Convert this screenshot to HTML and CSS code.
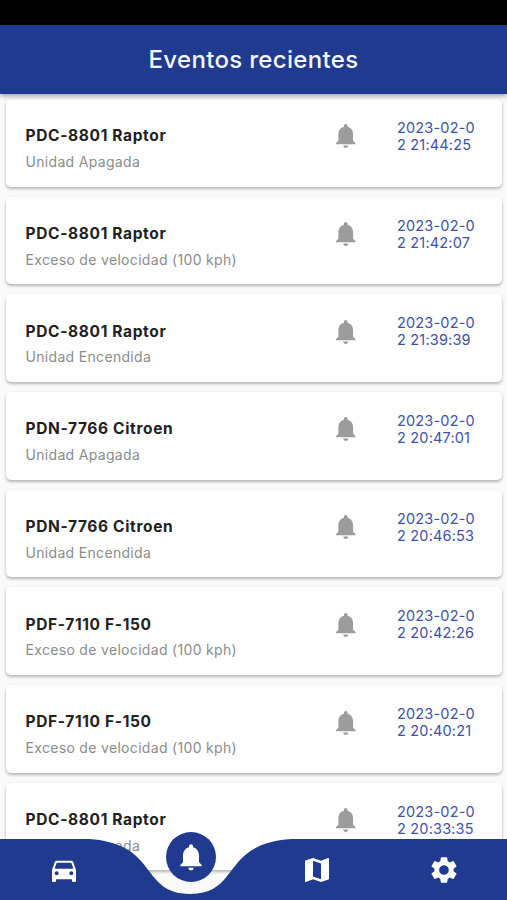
FILE: index.html
```html
<!DOCTYPE html>
<html lang="es">
<head>
<meta charset="utf-8">
<title>Eventos recientes</title>
<link rel="stylesheet" href="styles.css">
</head>
<body>
<svg class="defs" aria-hidden="true">
  <symbol id="bell" viewBox="0 0 24 24"><path d="M12 22c1.1 0 2-.9 2-2h-4c0 1.1.89 2 2 2zm6-6v-5c0-3.07-1.64-5.64-4.5-6.32V4c0-.83-.67-1.5-1.5-1.5s-1.5.67-1.5 1.5v.68C7.63 5.36 6 7.92 6 11v5l-2 2v1h16v-1l-2-2z"/></symbol>
</svg>
<div class="app">
  <div class="status"></div>
  <header class="bar"><h1>Eventos recientes</h1></header>
  <main class="list">
    <article class="card"><div class="info"><h2>PDC-8801 Raptor</h2><p>Unidad Apagada</p></div><svg class="bell"><use href="#bell"/></svg><time>2023-02-0<br>2 21:44:25</time></article>
    <article class="card"><div class="info"><h2>PDC-8801 Raptor</h2><p>Exceso de velocidad (100 kph)</p></div><svg class="bell"><use href="#bell"/></svg><time>2023-02-0<br>2 21:42:07</time></article>
    <article class="card"><div class="info"><h2>PDC-8801 Raptor</h2><p>Unidad Encendida</p></div><svg class="bell"><use href="#bell"/></svg><time>2023-02-0<br>2 21:39:39</time></article>
    <article class="card"><div class="info"><h2>PDN-7766 Citroen</h2><p>Unidad Apagada</p></div><svg class="bell"><use href="#bell"/></svg><time>2023-02-0<br>2 20:47:01</time></article>
    <article class="card"><div class="info"><h2>PDN-7766 Citroen</h2><p>Unidad Encendida</p></div><svg class="bell"><use href="#bell"/></svg><time>2023-02-0<br>2 20:46:53</time></article>
    <article class="card"><div class="info"><h2>PDF-7110 F-150</h2><p>Exceso de velocidad (100 kph)</p></div><svg class="bell"><use href="#bell"/></svg><time>2023-02-0<br>2 20:42:26</time></article>
    <article class="card"><div class="info"><h2>PDF-7110 F-150</h2><p>Exceso de velocidad (100 kph)</p></div><svg class="bell"><use href="#bell"/></svg><time>2023-02-0<br>2 20:40:21</time></article>
    <article class="card"><div class="info"><h2>PDC-8801 Raptor</h2><p>Unidad Apagada</p></div><svg class="bell"><use href="#bell"/></svg><time>2023-02-0<br>2 20:33:35</time></article>
  </main>
  <nav class="nav">
    <svg class="nav-shape" viewBox="0 0 507 61"><path d="M0 0H88.7C159.7 4.6 139.4 54.9 190.3 54.9C240.8 54.9 220.5 4.6 291.5 0H507V61H0Z"/></svg>
    <a class="item"><svg viewBox="0 0 24 24"><path d="M18.92 6.01C18.72 5.42 18.16 5 17.5 5h-11c-.66 0-1.21.42-1.42 1.01L3 12v8c0 .55.45 1 1 1h1c.55 0 1-.45 1-1v-1h12v1c0 .55.45 1 1 1h1c.55 0 1-.45 1-1v-8l-2.08-5.99zM6.5 16c-.83 0-1.5-.67-1.5-1.5S5.67 13 6.5 13s1.5.67 1.5 1.5S7.33 16 6.5 16zm11 0c-.83 0-1.5-.67-1.5-1.5s.67-1.5 1.5-1.5 1.5.67 1.5 1.5-.67 1.5-1.5 1.5zM5 11l1.5-4.5h11L19 11H5z"/></svg></a>
    <a class="item active"><span class="disc"><svg><use href="#bell"/></svg></span></a>
    <a class="item"><svg viewBox="0 0 24 24"><path d="M20.5 3l-.16.03L15 5.1 9 3 3.36 4.9c-.21.07-.36.25-.36.48V20.5c0 .28.22.5.5.5l.16-.03L9 18.9l6 2.1 5.64-1.9c.21-.07.36-.25.36-.48V3.5c0-.28-.22-.5-.5-.5zM15 19l-6-2.11V5l6 2.11V19z"/></svg></a>
    <a class="item"><svg viewBox="0 0 24 24"><path d="M19.14 12.94c.04-.3.06-.61.06-.94 0-.32-.02-.64-.07-.94l2.03-1.58c.18-.14.23-.41.12-.61l-1.92-3.32c-.12-.22-.37-.29-.59-.22l-2.39.96c-.5-.38-1.03-.7-1.62-.94l-.36-2.54c-.04-.24-.24-.41-.48-.41h-3.84c-.24 0-.43.17-.47.41l-.36 2.54c-.59.24-1.13.57-1.62.94l-2.39-.96c-.22-.08-.47 0-.59.22L2.74 8.87c-.12.21-.08.47.12.61l2.03 1.58c-.05.3-.09.63-.09.94s.02.64.07.94l-2.03 1.58c-.18.14-.23.41-.12.61l1.92 3.32c.12.22.37.29.59.22l2.39-.96c.5.38 1.03.7 1.62.94l.36 2.54c.05.24.24.41.48.41h3.84c.24 0 .44-.17.47-.41l.36-2.54c.59-.24 1.13-.56 1.62-.94l2.39.96c.22.08.47 0 .59-.22l1.92-3.32c.12-.22.07-.47-.12-.61l-2.01-1.58zM12 15.6c-1.98 0-3.6-1.62-3.6-3.6s1.62-3.6 3.6-3.6 3.6 1.62 3.6 3.6-1.62 3.6-3.6 3.6z"/></svg></a>
  </nav>
</div>
</body>
</html>
```

FILE: styles.css
```css
* { box-sizing: border-box; margin: 0; }
body { background: #fafafa; font-family: Inter, "Liberation Sans", sans-serif; }
.defs { position: absolute; width: 0; height: 0; }
.app { position: relative; height: 900px; overflow: hidden; display: flex; flex-direction: column; }
.status { height: 25px; background: #000; flex: none; }
.bar {
  position: relative; z-index: 1; flex: none; height: 69px;
  display: flex; align-items: center; justify-content: center;
  background: #1f3a8f; color: #f4f7ff;
  box-shadow: 0 2px 5px rgba(0, 0, 0, .36);
}
.bar h1 { font-size: 24px; font-weight: 500; letter-spacing: .32px; line-height: 30px; }
.list { display: flex; flex-direction: column; gap: 10.2px; padding: 5px 5px 0 6px; }
.card {
  flex: none; height: 87.5px; display: flex; align-items: flex-start;
  padding: 0 0 0 19.5px; border-radius: 5px; background: #fff;
  box-shadow: 0 2px 3px rgba(0, 0, 0, .24), 0 1px 4px rgba(0, 0, 0, .06);
}
.info { width: 305px; padding-top: 27.3px; }
.info h2 { font-size: 15.5px; font-weight: 650; letter-spacing: .65px; line-height: 20px; color: #212121; }
.info p { margin-top: 5.7px; font-size: 14px; letter-spacing: .32px; line-height: 19px; color: #8c8c8c; }
.bell { width: 29.5px; height: 29.5px; margin-top: 22.4px; fill: #9c9c9c; flex: none; }
.card time { margin: 20px 0 0 37px; font-size: 14.5px; letter-spacing: .18px; line-height: 17px; color: #3f51a8; white-space: nowrap; }
.nav { position: absolute; left: 0; right: 0; bottom: 0; height: 61px; display: grid; grid-template-columns: repeat(4, 1fr); padding-left: 1px; }
.nav-shape { position: absolute; inset: 0; width: 100%; height: 61px; fill: #1f3a8f; }
.item { position: relative; display: flex; justify-content: center; align-items: center; }
.item svg { width: 32px; height: 32px; fill: #fff; }
.item.active { align-items: flex-start; }
.disc { width: 50px; height: 50px; margin-top: -7px; border-radius: 50%; background: #1f3a8f; display: flex; align-items: center; justify-content: center; }
```
